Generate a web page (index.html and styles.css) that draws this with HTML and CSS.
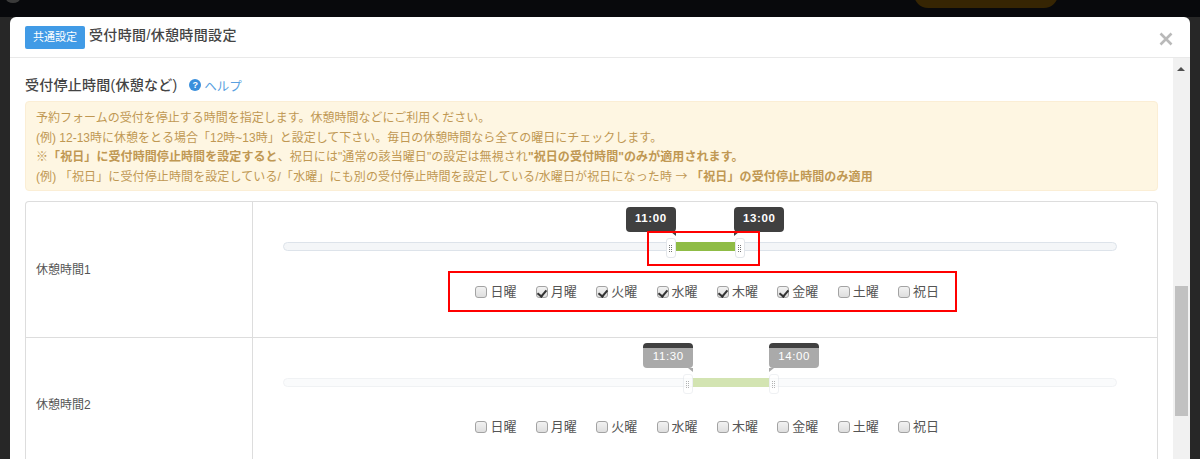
FILE: index.html
```html
<!DOCTYPE html>
<html lang="ja">
<head>
<meta charset="utf-8">
<title>受付時間/休憩時間設定</title>
<link rel="stylesheet" href="styles.css">
</head>
<body>
<div class="topbar"><span class="blob"></span><span class="pill"></span></div>
<div class="modal">
  <header class="modal-head">
    <span class="badge">共通設定</span>
    <h1 class="modal-title">受付時間/休憩時間設定</h1>
    <svg class="close" width="14" height="14" viewBox="0 0 14 14" aria-label="閉じる"><path d="M1.5 1.5 12.5 12.5M12.5 1.5 1.5 12.5"/></svg>
  </header>
  <div class="modal-body">
    <main class="content">
      <div class="section-head">
        <h2 class="section-title">受付停止時間(休憩など)</h2>
        <a class="help"><span class="help-icon">?</span>ヘルプ</a>
      </div>
      <div class="alert">
        <p>予約フォームの受付を停止する時間を指定します。休憩時間などにご利用ください。</p>
        <p>(例) 12-13時に休憩をとる場合「12時~13時」と設定して下さい。毎日の休憩時間なら全ての曜日にチェックします。</p>
        <p class="wide">※<b>「祝日」に受付時間停止時間を設定すると</b>、祝日には"通常の該当曜日"の設定は無視され<b>"祝日の受付時間"のみが適用されます。</b></p>
        <p class="wider">(例) 「祝日」に受付停止時間を設定している/「水曜」にも別の受付停止時間を設定している/水曜日が祝日になった時 <span class="to">→</span> <b>「祝日」の受付停止時間のみ適用</b></p>
      </div>
      <div class="table">
        <div class="row">
          <div class="label">休憩時間1</div>
          <div class="cell">
            <div class="slider">
              <div class="track"></div>
              <div class="range" style="left:47.1%;width:7.1%"></div>
              <div class="handle handle-left" style="left:47.1%"></div>
              <div class="handle handle-right" style="left:54.2%"></div>
              <div class="tip tip-left" style="left:47.1%">11:00</div>
              <div class="tip tip-right" style="left:54.1%">13:00</div>
            </div>
            <div class="days">
              <label class="day"><input type="checkbox">日曜</label>
              <label class="day"><input type="checkbox" checked>月曜</label>
              <label class="day"><input type="checkbox" checked>火曜</label>
              <label class="day"><input type="checkbox" checked>水曜</label>
              <label class="day"><input type="checkbox" checked>木曜</label>
              <label class="day"><input type="checkbox" checked>金曜</label>
              <label class="day"><input type="checkbox">土曜</label>
              <label class="day"><input type="checkbox">祝日</label>
            </div>
            <span class="mark mark-slider"></span>
            <span class="mark mark-days"></span>
          </div>
        </div>
        <div class="row off">
          <div class="label">休憩時間2</div>
          <div class="cell">
            <div class="slider">
              <div class="track"></div>
              <div class="range" style="left:49.2%;width:9.1%"></div>
              <div class="handle handle-left" style="left:49.2%"></div>
              <div class="handle handle-right" style="left:58.3%"></div>
              <div class="tip tip-left" style="left:49.2%">11:30</div>
              <div class="tip tip-right" style="left:58.3%">14:00</div>
            </div>
            <div class="days">
              <label class="day"><input type="checkbox">日曜</label>
              <label class="day"><input type="checkbox">月曜</label>
              <label class="day"><input type="checkbox">火曜</label>
              <label class="day"><input type="checkbox">水曜</label>
              <label class="day"><input type="checkbox">木曜</label>
              <label class="day"><input type="checkbox">金曜</label>
              <label class="day"><input type="checkbox">土曜</label>
              <label class="day"><input type="checkbox">祝日</label>
            </div>
          </div>
        </div>
      </div>
    </main>
    <div class="scrollbar"><span class="arrow"></span><span class="thumb"></span></div>
  </div>
</div>
</body>
</html>
```
FILE: styles.css
```css
* { box-sizing: border-box; }
html, body { margin: 0; height: 459px; overflow: hidden; }
body {
  background: #272727;
  font-family: "Liberation Sans", "Noto Sans CJK JP", sans-serif;
  font-size: 12px;
  color: #555;
  padding: 0 10px;
  display: flex;
  flex-direction: column;
}
.topbar {
  height: 17px;
  flex: none;
  margin: 0 -10px;
  background: #08090c;
  position: relative;
}
.blob {
  position: absolute; left: 6px; top: -6px;
  width: 14px; height: 9px; border-radius: 50%;
  background: #3a3a3a;
}
.pill {
  position: absolute; left: 914px; top: -10px;
  width: 144px; height: 18px; border-radius: 0 0 14px 14px;
  background: #362503;
}
.modal {
  flex: 1;
  min-height: 0;
  background: #fff;
  border-radius: 6px 6px 0 0;
  display: flex;
  flex-direction: column;
}
.modal-head {
  height: 41px;
  flex: none;
  display: flex;
  align-items: center;
  padding: 0 17px 0 15px;
  border-bottom: 1px solid #e9e9e9;
}
.badge {
  background: #419be6;
  color: #fff;
  font-size: 11px;
  line-height: 23px;
  height: 23px;
  width: 60px;
  text-align: center;
  border-radius: 2px;
  margin-top: 1px;
}
.modal-title {
  margin: -4px 0 0 4px;
  font-size: 14px;
  font-weight: 500;
  color: #444;
  line-height: 20px;
  letter-spacing: .35px;
  flex: 1;
}
.close { fill: none; stroke: #b9b9b9; stroke-width: 2.6; margin-top: 4px; }
.modal-body { flex: 1; min-height: 0; display: flex; overflow: hidden; }
.content { flex: 1; min-width: 0; padding: 15px 15px 0; }
.section-head {
  height: 24px;
  display: flex;
  align-items: center;
  gap: 11px;
  margin-bottom: 4px;
}
.section-title {
  margin: 0;
  font-size: 14px;
  font-weight: 500;
  color: #444;
  line-height: 24px;
  letter-spacing: .25px;
}
.help { display: flex; align-items: center; gap: 3px; color: #5a9fe0; font-size: 12.5px; }
.help-icon {
  width: 12px; height: 12px; border-radius: 50%;
  margin-left: 1px;
  background: #3a8fdc; color: #fff;
  font-size: 9px; font-weight: 700; line-height: 12px; text-align: center;
}
.alert {
  background: #fef6e2;
  border: 1px solid #fbeed5;
  border-radius: 4px;
  color: #c09853;
  padding: 7px 10px 0;
  height: 90px;
  margin-bottom: 10px;
}
.alert p { margin: 0; height: 19.5px; line-height: 19.5px; white-space: nowrap; }
.alert p.wide { letter-spacing: .08px; }
.alert p.wider { letter-spacing: .12px; }
.alert b { font-weight: 700; }
.to { font-family: "Noto Sans CJK JP", sans-serif; line-height: 0; }
.table { border: 1px solid #ddd; border-bottom: 0; border-radius: 4px 4px 0 0; }
.row { display: flex; height: 136px; border-bottom: 1px solid #ddd; }
.row.off { border-bottom: 0; }
.label {
  flex: none;
  width: 227px;
  padding: 0 10px 2px;
  border-right: 1px solid #ddd;
  display: flex;
  align-items: center;
  color: #555;
}
.row.off .label { padding-bottom: 5px; }
.cell { flex: 1; position: relative; padding: 40px 40px 0 30px; }
.slider { position: relative; height: 9px; }
.track {
  height: 9px;
  background: #f4f6f8;
  border: 1px solid #dde3ea;
  border-radius: 5px;
}
.range { position: absolute; top: 0; height: 9px; background: #8fbc45; }
.handle {
  position: absolute; top: -4px;
  width: 10px; height: 20px;
  background: #fff;
  border: 1px solid #e3e6ea;
  border-radius: 3px;
}
.handle::after {
  content: "";
  position: absolute; left: 2px; top: 5px;
  width: 4px; height: 8px;
  background-image: linear-gradient(#fff 50%, transparent 50%), linear-gradient(90deg, #777 50%, transparent 50%);
  background-size: 2px 2px;
}
.handle-left { margin-left: -10px; }
.handle-right { margin-left: 0; }
.tip {
  position: absolute; top: -35px;
  width: 50px; height: 25px;
  background: #404040;
  color: #fff;
  font-size: 11.5px;
  font-weight: 700;
  letter-spacing: .6px;
  line-height: 23px;
  text-align: center;
  border-radius: 4px;
}
.tip::after {
  content: "";
  position: absolute; top: 25px;
  border-top: 4px solid #404040;
}
.tip-left { margin-left: -50px; }
.tip-left::after { right: 0; border-left: 5px solid transparent; }
.tip-right { margin-left: 0; }
.tip-right::after { left: 0; border-right: 5px solid transparent; }
.days {
  margin: 32px -40px 0 -30px;
  display: flex;
  justify-content: center;
  gap: 18.9px;
  padding-left: 5px;
}
.row.off .days { margin-top: 31px; }
.day {
  display: flex;
  align-items: center;
  gap: 3px;
  line-height: 18px;
  color: #555;
  font-size: 13px;
  width: 41.5px;
  white-space: nowrap;
}
.day input {
  appearance: none;
  -webkit-appearance: none;
  flex: none;
  width: 12px; height: 12px;
  margin: 0;
  background: linear-gradient(#f2f2f2, #dedede);
  border: 1px solid #a3a3a3;
  border-radius: 3px;
  position: relative;
}
.day input:checked::after {
  content: "";
  position: absolute; left: 2.5px; top: 0.5px;
  width: 4px; height: 7px;
  border: solid #333;
  border-width: 0 2px 2px 0;
  transform: rotate(40deg);
}
.mark { position: absolute; border: 2px solid #f00; pointer-events: none; }
.mark-slider { left: 394px; top: 29px; width: 113px; height: 35px; }
.mark-days { left: 195px; top: 69px; width: 509px; height: 41px; }
.row.off .track { background: #fafbfc; border-color: #f0f2f4; }
.row.off .range { background: #d3e4b2; }
.row.off .handle { opacity: .55; }
.row.off .tip {
  background: #aaa;
  border-top: 5px solid #404040;
  line-height: 17px;
  font-weight: 400;
  letter-spacing: .6px;
}
.row.off .tip::after { top: 20px; border-top-color: #aaa; }
.scrollbar {
  flex: none;
  width: 17px;
  background: #f1f1f1;
  position: relative;
}
.arrow {
  position: absolute; left: 4px; top: 9px;
  border: 4px solid transparent;
  border-top: 0;
  border-bottom: 4px solid #505050;
}
.thumb {
  position: absolute; left: 2px; top: 228px;
  width: 13px; height: 130px;
  background: #c1c1c1;
}
```
